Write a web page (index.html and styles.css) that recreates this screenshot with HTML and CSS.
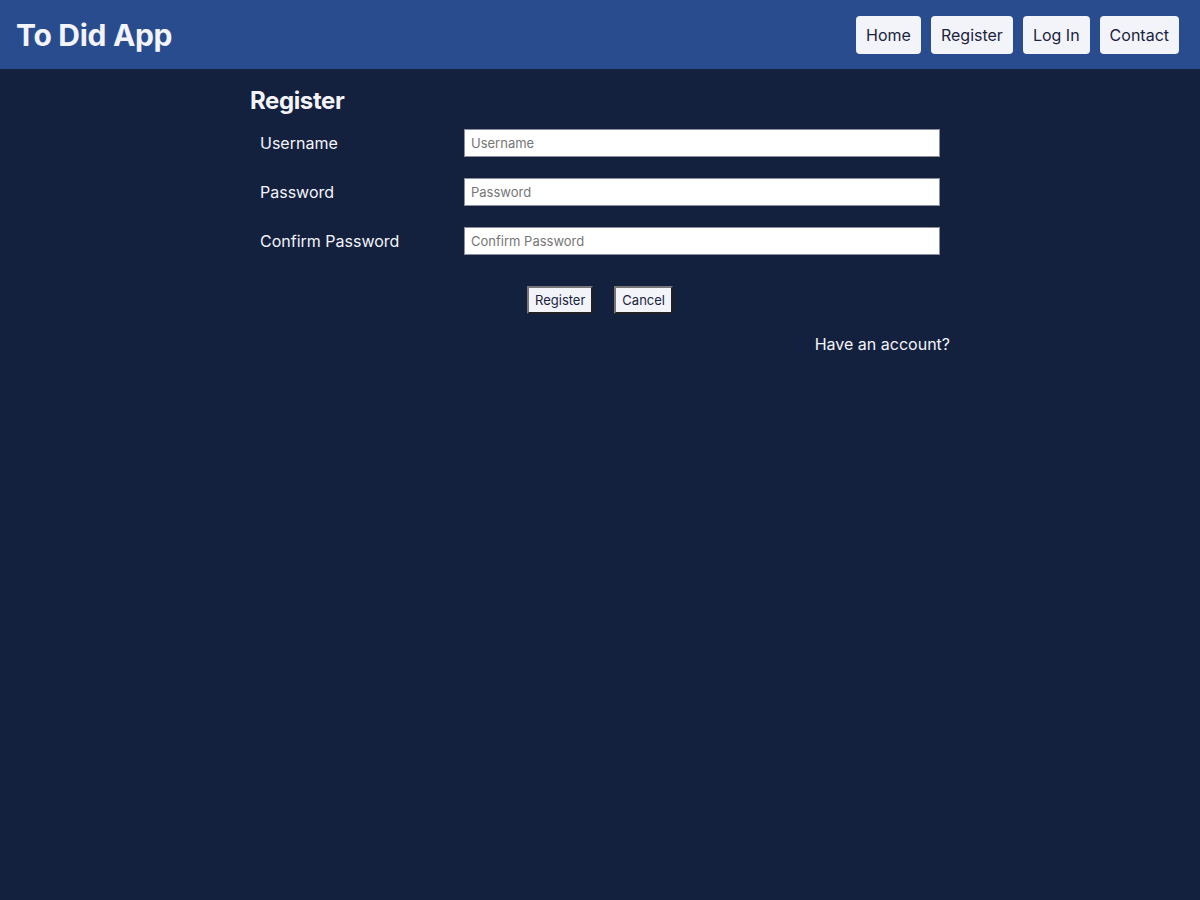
FILE: index.html
```html
<!DOCTYPE html>
<html lang="en">
<head>
<meta charset="utf-8">
<title>To Did App - Register</title>
<link rel="stylesheet" href="styles.css">
</head>
<body>
<header class="topbar">
  <h1 class="brand">To Did App</h1>
  <nav class="nav">
    <a class="nav-btn" href="#">Home</a>
    <a class="nav-btn" href="#">Register</a>
    <a class="nav-btn" href="#">Log In</a>
    <a class="nav-btn" href="#">Contact</a>
  </nav>
</header>
<main class="main">
  <section class="panel">
    <h2 class="title">Register</h2>
    <form class="form">
      <div class="row">
        <label class="label" for="u">Username</label>
        <input class="field" id="u" type="text" placeholder="Username">
      </div>
      <div class="row">
        <label class="label" for="p">Password</label>
        <input class="field" id="p" type="password" placeholder="Password">
      </div>
      <div class="row">
        <label class="label" for="c">Confirm Password</label>
        <input class="field" id="c" type="password" placeholder="Confirm Password">
      </div>
      <div class="actions">
        <button class="btn" type="button">Register</button>
        <button class="btn" type="button">Cancel</button>
      </div>
    </form>
    <div class="foot"><a class="link" href="#">Have an account?</a></div>
  </section>
</main>
</body>
</html>
```
FILE: styles.css
```css
* { box-sizing: border-box; }
html, body { margin: 0; padding: 0; }
body {
  background: #13213f;
  font-family: Inter, "Noto Sans", "Liberation Sans", sans-serif;
  color: #f3f4fa;
  min-height: 900px;
}
.topbar {
  height: 69px;
  background: #294c8f;
  display: flex;
  align-items: center;
  justify-content: space-between;
  padding: 0 21px 0 16px;
}
.brand {
  margin: 0;
  font-size: 30px;
  font-weight: 700;
  letter-spacing: -0.3px;
  color: #f3f4fa;
}
.nav { display: flex; gap: 10px; }
.nav-btn {
  display: flex;
  align-items: center;
  height: 38px;
  padding: 0 10px;
  background: #f3f4fa;
  color: #1a2340;
  border-radius: 4px;
  text-decoration: none;
  font-size: 16px;
}
.main { display: flex; justify-content: center; }
.panel { width: 700px; }
.title {
  margin: 18px 0 14px 0;
  font-size: 24px;
  font-weight: 700;
  letter-spacing: -0.4px;
  height: 28px;
  line-height: 28px;
}
.form { display: flex; flex-direction: column; }
.row {
  display: grid;
  grid-template-columns: 204px 476px;
  align-items: center;
  padding-left: 10px;
  margin-bottom: 21px;
}
.label { font-size: 16px; }
.field {
  height: 28px;
  border: 1px solid #8a8f9a;
  background: #fff;
  padding: 0 6px;
  font-family: inherit;
  font-size: 13px;
  color: #222;
  margin: 0;
}
.field::placeholder { color: #767676; }
.actions {
  display: flex;
  justify-content: center;
  gap: 21px;
  margin-top: 10px;
}
.btn {
  height: 28px;
  padding: 0 6px;
  background: #f3f4fa;
  border: 2px outset #767676;
  color: #1a2340;
  font-family: inherit;
  font-size: 13px;
}
.foot {
  display: flex;
  justify-content: flex-end;
  margin-top: 20px;
}
.link {
  color: #f3f4fa;
  text-decoration: none;
  font-size: 16px;
}
```
